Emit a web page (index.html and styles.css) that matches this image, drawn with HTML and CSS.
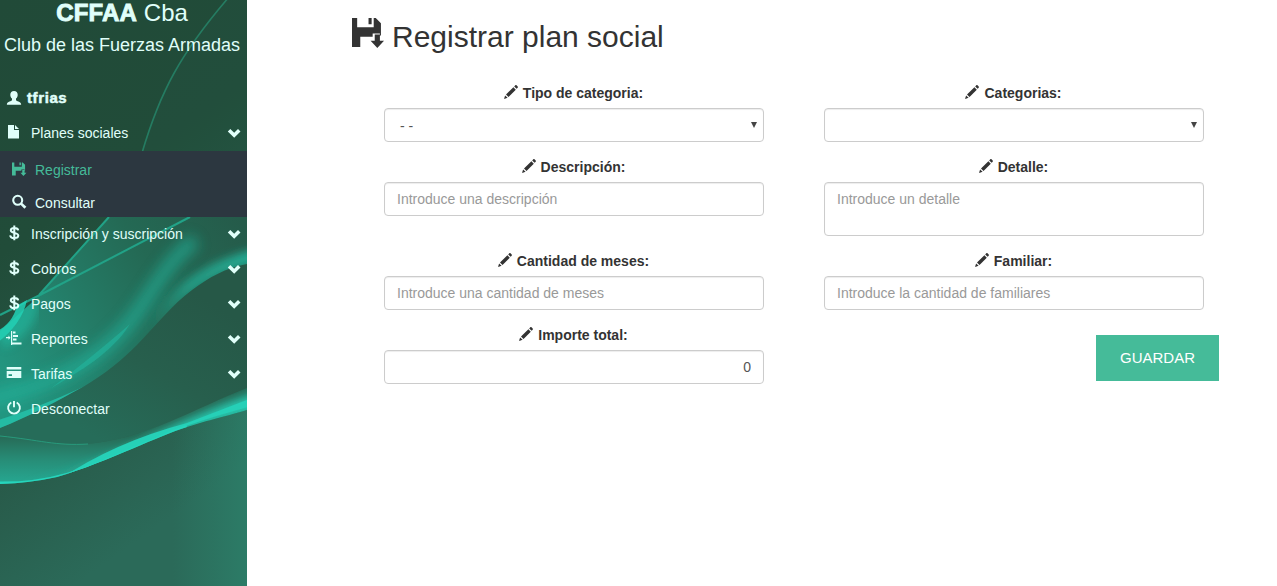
FILE: index.html
```html
<!DOCTYPE html>
<html lang="es">
<head>
<meta charset="utf-8">
<title>Registrar plan social</title>
<link rel="stylesheet" href="styles.css">
</head>
<body>
<svg class="sprite" aria-hidden="true">
  <symbol id="i-user" viewBox="0 0 14 14"><path d="M7 0c2.300 0 3.700 1.500 3.700 3.700 0 1.700-.7 3-1.700 3.900v1.600c0 .8 4.900 1.500 5.100 3.800v.8H-.1V13c.2-2.300 5.100-3 5.100-3.800V7.600C4 6.700 3.300 5.400 3.300 3.700 3.300 1.500 4.700 0 7 0z"/></symbol>
  <symbol id="i-file" viewBox="0 0 14 14"><path d="M1 0h6v5h5v8.500H1zM8 0l4 4H8z"/></symbol>
  <symbol id="i-save" viewBox="0 0 30 30"><path d="M0 1h5v9h16V1h2l5 5v12h-1v-2h-7v3H8v10H0zM16 1h3v6h-3zM22 17h5v6h4l-6.500 7-6.500-7h4z"/></symbol>
  <symbol id="i-search" viewBox="0 0 14 14"><circle cx="5.700" cy="5.300" r="4.500" fill="none" stroke="currentColor" stroke-width="2.100"/><path d="M8 9.200 9.700 7.600l4.700 4.200-2 2z"/></symbol>
  <symbol id="i-usd" viewBox="0 0 14 14"><path d="M7.300-.4v14.600M11.200 4.300C11 2.700 9.500 1.900 7.300 1.900 5 1.900 3.800 2.900 3.800 4.300c0 3.400 7.500 1.800 7.500 5.200 0 1.500-1.400 2.600-3.900 2.600-2.500 0-4-1-4.200-2.800" fill="none" stroke="currentColor" stroke-width="2"/></symbol>
  <symbol id="i-stats" viewBox="0 0 14 14"><path d="M4 0h1.200v14H4zM6 .5h2.500V2.500H6zM6 4h5v2H6zM6 7.500h3.500v2H6zM5 11.500h9.500v2H5zM-1 6h2.500V4.500l2 2.200-2 2V7.200H-1z"/></symbol>
  <symbol id="i-card" viewBox="0 0 14 14"><path fill-rule="evenodd" d="M-.3 1h14.600v2.500H-.3zM-.3 5h14.600v7H-.3zM1.500 8.300v1.700h3.500V8.300z"/></symbol>
  <symbol id="i-off" viewBox="0 0 14 14"><path d="M4.300 1.500a5.900 5.900 0 1 0 5.400 0M7 0v6.300" fill="none" stroke="currentColor" stroke-width="1.900"/></symbol>
  <symbol id="i-down" viewBox="0 0 14 14"><path d="M.8 5.400 3.300 3 7.200 6.700 11 3l2.500 2.400-6.300 6.300z"/></symbol>
  <symbol id="i-pencil" viewBox="0 0 14 14"><path d="M0 14l1.100-3.600 2.500 2.400zM2 9.500 9.400 2.300l2.400 2.400L4.500 12zM10.200 1.400 11.300.3c.4-.3.800-.3 1.200 0l1.200 1.200c.3.400.3.800 0 1.200l-1.100 1.100z"/></symbol>
</svg>
<div class="app">
  <aside class="sidebar">
    <svg class="waves" viewBox="0 0 247 586" aria-hidden="true">
      <defs>
        <linearGradient id="base" x1="0" y1="0" x2=".3" y2="1"><stop offset="0" stop-color="#214a38"/><stop offset=".4" stop-color="#214c39"/><stop offset=".75" stop-color="#285a49"/><stop offset="1" stop-color="#2b6a59"/></linearGradient>
        <linearGradient id="edge"><stop offset=".7" stop-color="#2d8a72" stop-opacity="0"/><stop offset="1" stop-color="#2d8a72" stop-opacity=".55"/></linearGradient>
        <linearGradient id="veil" gradientUnits="userSpaceOnUse" x1="0" y1="370" x2="240" y2="220"><stop offset="0" stop-color="#239680"/><stop offset=".35" stop-color="#247c67"/><stop offset=".65" stop-color="#246954"/><stop offset="1" stop-color="#255b4a"/></linearGradient>
        <linearGradient id="mid" gradientUnits="userSpaceOnUse" x1="190" y1="290" x2="100" y2="440"><stop offset="0" stop-color="#265847"/><stop offset=".5" stop-color="#275f4d"/><stop offset="1" stop-color="#266c59"/></linearGradient>
        <linearGradient id="low" gradientUnits="userSpaceOnUse" x1="0" y1="436" x2="0" y2="484"><stop offset="0" stop-color="#276a56"/><stop offset=".5" stop-color="#278d77"/><stop offset="1" stop-color="#26a892"/></linearGradient>
        <linearGradient id="crest" gradientUnits="userSpaceOnUse" x1="150" y1="0" x2="247" y2="0"><stop offset="0" stop-color="#23a991" stop-opacity="0"/><stop offset=".4" stop-color="#23a991" stop-opacity=".75"/><stop offset="1" stop-color="#23a991"/></linearGradient>
        <clipPath id="veilClip"><path d="M109 217 38 297 0 331V428C28 417 55 402 83 387 105 374 122 360 137 345 158 323 172 305 192 290 210 277 225 268 247 264V217z"/></clipPath>
        <clipPath id="lowClip"><path d="M0 436C30 439 50 444 85 444 145 440 195 408 247 388V410C220 418 205 421 187 427 160 435 110 461 57 477Q30 483 0 484z"/></clipPath>
        <filter id="b1" x="-20%" y="-20%" width="140%" height="140%"><feGaussianBlur stdDeviation=".7"/></filter>
        <filter id="b4" x="-30%" y="-60%" width="160%" height="220%"><feGaussianBlur stdDeviation="4"/></filter>
        <filter id="b8" x="-40%" y="-40%" width="180%" height="180%"><feGaussianBlur stdDeviation="7"/></filter>
      </defs>
      <rect width="247" height="586" fill="url(#base)"/>
      <path d="M142 153C160 92 180 54 229-3H247V217H120z" fill="#2c6650" opacity=".12"/>
      <path d="M142 153C160 92 180 54 229-3" fill="none" stroke="#257c62" stroke-width="1.600"/>
      <path d="M0 428C28 417 55 402 83 383 105 370 122 358 137 345 158 323 172 305 192 290 210 277 225 268 247 264V390C195 408 145 440 85 444Q50 444 0 436z" fill="url(#mid)"/>
      <path d="M247 400V586H0V484Q57 484 133 448 170 430 247 410z" fill="url(#edge)"/>
      <g clip-path="url(#veilClip)">
        <rect y="210" width="247" height="225" fill="url(#veil)"/>
        <path d="M-20 402C55 385 95 362 125 328 150 300 160 268 195 240" fill="none" stroke="#22b69e" stroke-width="14" opacity=".65" filter="url(#b8)"/>
        <path d="M50 389C80 371 112 353 130 324Q97 353 50 389z" fill="#22b69e" opacity=".6" filter="url(#b1)"/>
        <path d="M130 350C165 306 192 270 260 255" fill="none" stroke="url(#crest)" stroke-width="14" filter="url(#b4)"/>
        <path d="M0 340Q28 325 30 300" fill="none" stroke="#20c4aa" stroke-width="20" opacity=".5" filter="url(#b4)"/>
        <path d="M-5 431C28 417 35 415 83 387Q35 409-5 421z" fill="#25c7af" opacity=".75" filter="url(#b1)"/>
      </g>
      <path d="M109 217 39 295M190 217 40 295 0 315" fill="none" stroke="#20a287" stroke-width="2" filter="url(#b1)"/>
      <path d="M17 306 27 300Q22 324-3 343V331Q12 324 17 306z" fill="#20d1b5" opacity=".85" filter="url(#b1)"/>
      <g clip-path="url(#lowClip)">
        <rect y="380" width="247" height="110" fill="url(#low)"/>
        <path d="M20 488C110 463 160 425 260 391V412C190 425 140 455 20 488z" fill="#25c4ab" filter="url(#b4)"/>
        <path d="M60 479Q115 442 187 423L252 398V406Q180 425 133 448z" fill="#25d0b7" filter="url(#b1)"/>
        <path d="M-5 484C70 486 105 459 187 427" fill="none" stroke="#25d5bc" stroke-width="5" filter="url(#b1)"/>
      </g>
      <path d="M0 436C40 440 55 446 88 444" fill="none" stroke="#279a7c" stroke-width="1"/>
    </svg>
    <header class="brand">
      <div class="brand-name"><b>CFFAA</b> Cba</div>
      <div class="brand-sub">Club de las Fuerzas Armadas</div>
    </header>
    <nav class="menu">
      <a class="item user"><svg class="ico"><use href="#i-user"/></svg><b>tfrias</b></a>
      <a class="item"><svg class="ico"><use href="#i-file"/></svg><span>Planes sociales</span><svg class="ico chev"><use href="#i-down"/></svg></a>
      <div class="submenu">
        <a class="subitem active"><svg class="ico"><use href="#i-save"/></svg><span>Registrar</span></a>
        <a class="subitem"><svg class="ico"><use href="#i-search"/></svg><span>Consultar</span></a>
      </div>
      <a class="item"><svg class="ico"><use href="#i-usd"/></svg><span>Inscripción y suscripción</span><svg class="ico chev"><use href="#i-down"/></svg></a>
      <a class="item"><svg class="ico"><use href="#i-usd"/></svg><span>Cobros</span><svg class="ico chev"><use href="#i-down"/></svg></a>
      <a class="item"><svg class="ico"><use href="#i-usd"/></svg><span>Pagos</span><svg class="ico chev"><use href="#i-down"/></svg></a>
      <a class="item"><svg class="ico"><use href="#i-stats"/></svg><span>Reportes</span><svg class="ico chev"><use href="#i-down"/></svg></a>
      <a class="item"><svg class="ico"><use href="#i-card"/></svg><span>Tarifas</span><svg class="ico chev"><use href="#i-down"/></svg></a>
      <a class="item"><svg class="ico"><use href="#i-off"/></svg><span>Desconectar</span></a>
    </nav>
  </aside>
  <main class="content">
    <h1 class="title"><svg class="title-ico"><use href="#i-save"/></svg>Registrar plan social</h1>
    <form class="form">
      <div class="field"><label class="label"><svg class="ico"><use href="#i-pencil"/></svg>Tipo de categoria:</label><div class="control select"><span>- -</span><i class="caret"></i></div></div>
      <div class="field"><label class="label"><svg class="ico"><use href="#i-pencil"/></svg>Categorias:</label><div class="control select"><span></span><i class="caret"></i></div></div>
      <div class="field"><label class="label"><svg class="ico"><use href="#i-pencil"/></svg>Descripción:</label><input class="control" placeholder="Introduce una descripción"></div>
      <div class="field"><label class="label"><svg class="ico"><use href="#i-pencil"/></svg>Detalle:</label><textarea class="control area" placeholder="Introduce un detalle"></textarea></div>
      <div class="field"><label class="label"><svg class="ico"><use href="#i-pencil"/></svg>Cantidad de meses:</label><input class="control" placeholder="Introduce una cantidad de meses"></div>
      <div class="field"><label class="label"><svg class="ico"><use href="#i-pencil"/></svg>Familiar:</label><input class="control" placeholder="Introduce la cantidad de familiares"></div>
      <div class="field"><label class="label"><svg class="ico"><use href="#i-pencil"/></svg>Importe total:</label><input class="control amount" value="0"></div>
      <div class="actions"><button type="button" class="save">GUARDAR</button></div>
    </form>
  </main>
</div>
</body>
</html>
```
FILE: styles.css
```css
* { box-sizing: border-box; }
body { margin: 0; font: 14px/20px "Liberation Sans", Arial, sans-serif; color: #333; background: #fff; overflow: hidden; }
.sprite { position: absolute; width: 0; height: 0; }
.app { display: flex; height: 586px; }
.ico { width: 14px; height: 14px; flex: none; fill: currentColor; overflow: visible; }
symbol { overflow: visible; }

.sidebar { position: relative; width: 247px; flex: none; overflow: hidden; color: #e0fffa; }
.waves { position: absolute; inset: 0; width: 247px; height: 586px; }
.brand { position: relative; height: 80px; text-align: center; white-space: nowrap; }
.brand-name { font-size: 24px; line-height: 26px; padding-right: 3px; }
.brand-name b { letter-spacing: .2px; -webkit-text-stroke: .9px currentColor; }
.brand-sub { font-size: 18px; line-height: 20px; padding-top: 9px; padding-right: 3px; }
.menu { position: relative; }
.item { display: flex; align-items: center; height: 35px; padding: 0 6px 2px 7px; gap: 10px; }
.item.user { height: 36px; padding-bottom: 0; gap: 6px; }
.user b { font-size: 15px; letter-spacing: .6px; -webkit-text-stroke: .5px currentColor; }
.chev { margin-left: auto; }
.item > .ico:first-child { margin-top: -1px; }
.submenu { height: 66px; background: #2c3740; padding-top: 2px; }
.subitem { display: flex; align-items: center; height: 33px; padding-left: 12px; gap: 9px; }
.subitem.active { color: #45bb99; }
.subitem .ico { margin-top: -2px; }

.content { flex: 1; padding: 17px 58px 0 105px; }
.title { display: flex; align-items: flex-start; gap: 9px; margin: 0 0 43px; height: 23px; font-size: 30px; font-weight: 400; line-height: 40px; }
.title-ico { width: 31px; height: 31px; flex: none; fill: currentColor; overflow: visible; }
.form { display: grid; grid-template-columns: 380px 380px; column-gap: 60px; row-gap: 15px; padding-left: 32px; }
.label { display: flex; justify-content: center; gap: 5px; height: 20px; margin-bottom: 5px; padding-right: 1px; font-weight: 700; }
.label .ico { margin-top: 2px; }
.control { display: block; width: 100%; height: 34px; margin: 0; padding: 6px 12px; border: 1px solid #ccc; border-radius: 4px; background: #fff; color: #555; font: inherit; box-shadow: inset 0 1px 1px rgba(0,0,0,.075); resize: none; }
.control::placeholder { color: #999; opacity: 1; }
.area { height: 54px; }
.amount { text-align: right; }
.select { display: flex; justify-content: space-between; padding: 7px 6px 5px 15px; }
.caret { width: 6px; height: 6px; margin-top: 6px; background: #444; clip-path: polygon(0 0, 100% 0, 50% 100%); }
.actions { display: flex; justify-content: flex-end; margin-right: -15px; padding-top: 10px; }
.save { width: 123px; height: 46px; border: 0; padding: 0; background: #45bb99; color: #fff; font: 15px/20px "Liberation Sans", Arial, sans-serif; }
```
